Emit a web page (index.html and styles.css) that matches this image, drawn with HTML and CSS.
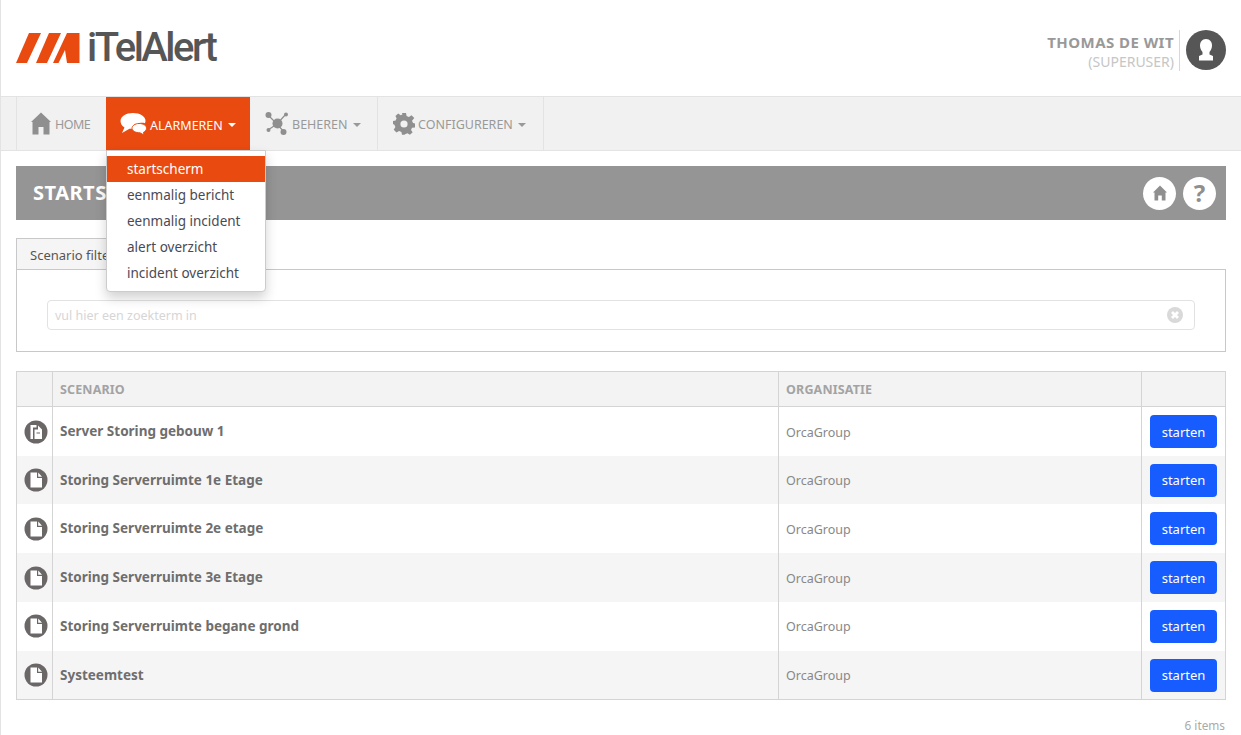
FILE: index.html
```html
<!DOCTYPE html>
<html lang="nl">
<head>
<meta charset="utf-8">
<title>iTelAlert</title>
<link rel="stylesheet" href="styles.css">
</head>
<body>
<svg class="sprites" width="0" height="0" aria-hidden="true">
  <symbol id="doc" viewBox="0 0 24 24">
    <circle cx="12" cy="12" r="11.500" fill="#6b6767"/>
    <path d="M6.500 4.500h6.500v5.500h5v9.500H6.500z" fill="#fff"/>
    <path d="M14.200 4.500l3.800 4.200h-3.800z" fill="#fff"/>
  </symbol>
  <symbol id="docs" viewBox="0 0 24 24">
    <circle cx="12" cy="12" r="11.500" fill="#6b6767"/>
    <path d="M6.500 5h6v2.500H9V19H6.500z" fill="#fff"/>
    <path d="M10.500 9.500h3.500V5.500l4 4v9.500h-7.500z" fill="#fff"/>
    <path d="M12.500 12.500h3.500v1h-3.500z" fill="#6b6767"/>
  </symbol>
</svg>
<header class="top">
  <div class="logo">
    <svg class="logo-mark" width="64" height="30" viewBox="0 0 64 30">
      <path d="M13 0h12L11 30H0z" fill="#e94a10"/>
      <path d="M33 0h12L31 30H20z" fill="#e94a10"/>
      <path d="M51 0h12.500v30H51l-2-13-6.500 13H37z" fill="#e94a10"/>
    </svg>
    <span class="logo-text">iTelAlert</span>
  </div>
  <div class="user">
    <div class="user-text">
      <div class="user-name">THOMAS DE WIT</div>
      <div class="user-role">(SUPERUSER)</div>
    </div>
    <div class="avatar">
      <svg width="40" height="40" viewBox="0 0 40 40">
        <circle cx="20" cy="20" r="20" fill="#565656"/>
        <path d="M20 9c4 0 6 3 6 6.500 0 3-1.200 5-2.500 6.500v2.500l3.500 1.500v4.500H13V26l3.500-1.500V22c-1.300-1.500-2.500-3.500-2.500-6.500C14 12 16 9 20 9z" fill="#fff"/>
      </svg>
    </div>
  </div>
</header>

<nav class="nav">
  <a class="nav-item nav-home">
    <svg width="20" height="23" viewBox="0 0 20 23"><path d="M10 .5L20 10h-1.500v12.500H12.500V15h-5v7.500H1.500V10H0z" fill="#8f8f8f"/></svg>
    <span>HOME</span>
  </a>
  <a class="nav-item nav-active">
    <svg width="27" height="24" viewBox="0 0 27 24">
      <path d="M13 1c7 0 12.500 3.300 12.500 8 0 1-.3 1.500-.6 2.200C20 10 15 12 13.500 16.500 12 16.800 11 17 9.500 16.700L2 21l2.500-5.500C2 14 .5 11.500.5 9 .5 4.300 6 1 13 1z" fill="#fff"/>
      <path d="M19 11.500c4.500 0 7.500 2 7.500 4.800 0 1.700-1.300 3.200-3 4l.5 2.700-4-2.200c-4.500 0-8-2-8-4.500s3-4.800 7-4.800z" fill="#fff" stroke="#e94a10" stroke-width="1"/>
    </svg>
    <span>ALARMEREN</span><i class="caret"></i>
  </a>
  <a class="nav-item nav-manage">
    <svg width="24" height="24" viewBox="0 0 24 24">
      <path d="M3 3l9 9M21 2l-9 10M3 18l9-6M19 20l-7-8" stroke="#8f8f8f" stroke-width="1.200"/>
      <circle cx="12.500" cy="11.500" r="5" fill="#8f8f8f"/>
      <circle cx="3.500" cy="3" r="3" fill="#8f8f8f"/>
      <circle cx="21" cy="2.500" r="2" fill="#8f8f8f"/>
      <circle cx="3.500" cy="18" r="2" fill="#8f8f8f"/>
      <circle cx="18.500" cy="20" r="3" fill="#8f8f8f"/>
    </svg>
    <span>BEHEREN</span><i class="caret"></i>
  </a>
  <a class="nav-item nav-config">
    <svg width="22" height="22" viewBox="0 0 22 22">
      <path d="M9 0h4l.6 3 2.300 1 2.600-1.700 2.800 2.800L19 7.700l1 2.300 2 .6v4l-3 .2-1 2.300 1.700 2.200-2.800 2.400-2.400-1.500-2.500 1-.4 .6H9l-.6-2.900-2.300-1-2.600 1.700-2.800-2.800L2.400 14l-1-2.300L0 11V8l2.600-.4 1-2.300L2.400 3l2.800-2.400 2.500 1.600L9.400 1.400z" fill="#8f8f8f"/>
      <circle cx="11" cy="11" r="3.600" fill="#f1f1f1"/>
    </svg>
    <span>CONFIGUREREN</span><i class="caret"></i>
  </a>
</nav>

<ul class="menu">
  <li class="menu-on">startscherm</li>
  <li>eenmalig bericht</li>
  <li>eenmalig incident</li>
  <li>alert overzicht</li>
  <li>incident overzicht</li>
</ul>

<main class="content">
  <div class="title-bar">
    <h1>STARTSCHERM</h1>
    <div class="title-icons">
      <span class="round">
        <svg width="14" height="16" viewBox="0 0 14 16"><path d="M7 .5L14 7.500h-1.500V15.500H8.800V10.500H5.200V15.500H1.500V7.500H0z" fill="#8f8f8f"/></svg>
      </span>
      <span class="round round-q">?</span>
    </div>
  </div>

  <div class="tab">Scenario filter</div>
  <section class="filter">
    <div class="search">
      <span>vul hier een zoekterm in</span>
      <svg width="16" height="16" viewBox="0 0 16 16">
        <circle cx="8" cy="8" r="8" fill="#d9d9d9"/>
        <path d="M5 5l6 6M11 5l-6 6" stroke="#fff" stroke-width="2.800"/>
      </svg>
    </div>
  </section>

  <table class="grid">
    <colgroup>
      <col class="c-icon"><col class="c-name"><col class="c-org"><col class="c-act">
    </colgroup>
    <thead>
      <tr><th></th><th>SCENARIO</th><th>ORGANISATIE</th><th></th></tr>
    </thead>
    <tbody>
      <tr><td class="ic"><svg width="24" height="24"><use href="#docs"/></svg></td><td class="name">Server Storing gebouw 1</td><td class="org">OrcaGroup</td><td class="act"><button>starten</button></td></tr>
      <tr><td class="ic"><svg width="24" height="24"><use href="#doc"/></svg></td><td class="name">Storing Serverruimte 1e Etage</td><td class="org">OrcaGroup</td><td class="act"><button>starten</button></td></tr>
      <tr><td class="ic"><svg width="24" height="24"><use href="#doc"/></svg></td><td class="name">Storing Serverruimte 2e etage</td><td class="org">OrcaGroup</td><td class="act"><button>starten</button></td></tr>
      <tr><td class="ic"><svg width="24" height="24"><use href="#doc"/></svg></td><td class="name">Storing Serverruimte 3e Etage</td><td class="org">OrcaGroup</td><td class="act"><button>starten</button></td></tr>
      <tr><td class="ic"><svg width="24" height="24"><use href="#doc"/></svg></td><td class="name">Storing Serverruimte begane grond</td><td class="org">OrcaGroup</td><td class="act"><button>starten</button></td></tr>
      <tr><td class="ic"><svg width="24" height="24"><use href="#doc"/></svg></td><td class="name">Systeemtest</td><td class="org">OrcaGroup</td><td class="act"><button>starten</button></td></tr>
    </tbody>
  </table>
  <div class="count">6 items</div>
</main>
</body>
</html>
```

FILE: styles.css
```css
* { box-sizing: border-box; }
html, body { height: 100%; }
body {
  margin: 0;
  overflow: hidden;
  background: #fff;
  border-left: 1px solid #e3e3e3;
  font-family: "Noto Sans", "Open Sans", sans-serif;
  font-size: 13px;
  color: #666;
  position: relative;
}
.sprites { position: absolute; }

.top {
  height: 96px;
  display: flex;
  justify-content: space-between;
  align-items: flex-start;
  padding: 30px 15px 0 15px;
}
.logo { display: flex; align-items: center; height: 36px; gap: 7px; }
.logo-mark { display: block; }
.logo-text {
  font-family: Roboto, sans-serif;
  font-size: 40px;
  font-weight: 500;
  letter-spacing: -2.500px;
  color: #565656;
  line-height: 36px;
}
.user { display: flex; align-items: stretch; }
.user-text { text-align: right; padding: 3px 5px 0 0; border-right: 1px solid #d8d8d8; height: 41px; }
.user-name { font-weight: 700; font-size: 15px; letter-spacing: .45px; color: #999; line-height: 19px; }
.user-role { font-size: 14px; color: #c6c6c6; line-height: 20px; }
.avatar { margin-left: 6px; height: 40px; }
.avatar svg { display: block; }

.nav {
  height: 55px;
  display: flex;
  padding-left: 15px;
  background: #f1f1f1;
  border-top: 1px solid #e3e3e3;
  border-bottom: 1px solid #e3e3e3;
}
.nav-item {
  display: flex;
  align-items: center;
  gap: 3px;
  padding-top: 2px;
  border-left: 1px solid #e3e3e3;
  font-size: 12.500px;
  color: #999;
}
.nav-item svg { margin-top: -2px; }
.nav-home { width: 90px; padding-left: 14px; gap: 4px; letter-spacing: -.5px; }
.nav-active {
  width: 144px;
  padding-left: 14px;
  background: #e94a10;
  color: #fff;
  border-left: 0;
  height: 54px;
}
.nav-manage { width: 127px; padding-left: 15px; gap: 3px; border-left: 0; }
.nav-config { width: 167px; padding-left: 15px; gap: 3px; border-right: 1px solid #e3e3e3; }
.caret {
  width: 0;
  height: 0;
  margin-left: 2px;
  border-left: 4px solid transparent;
  border-right: 4px solid transparent;
  border-top: 4px solid currentColor;
}

.menu {
  position: absolute;
  left: 105px;
  top: 150px;
  width: 160px;
  height: 142px;
  margin: 0;
  padding: 5px 0;
  list-style: none;
  background: #fff;
  border: 1px solid #ccc;
  border-radius: 0 0 4px 4px;
  box-shadow: 0 6px 12px rgba(0, 0, 0, .18);
  z-index: 5;
}
.menu li {
  height: 26px;
  line-height: 26px;
  padding-left: 20px;
  font-size: 13.500px;
  color: #4a4a55;
}
.menu .menu-on { background: #e94a10; color: #fff; }

.content { padding: 15px 15px 0; }
.title-bar {
  height: 54px;
  display: flex;
  justify-content: space-between;
  align-items: center;
  background: #959595;
  padding: 0 10px 0 17px;
}
.title-bar h1 { margin: 0 0 2px; font-size: 20px; letter-spacing: .5px; font-weight: 700; color: #fff; }
.title-icons { display: flex; gap: 7px; }
.round {
  width: 33px;
  height: 33px;
  border-radius: 50%;
  background: #fff;
  display: flex;
  align-items: center;
  justify-content: center;
}
.round-q { font-size: 24px; font-weight: 700; color: #8f8f8f; line-height: 1; }

.tab {
  width: 120px;
  height: 32px;
  margin-top: 18px;
  padding-left: 13px;
  line-height: 32px;
  font-size: 13px;
  background: #f5f5f5;
  border: 1px solid #c8c8c8;
  border-bottom: 0;
  color: #555;
}
.filter {
  height: 83px;
  margin-top: -1px;
  border: 1px solid #c8c8c8;
  padding: 30px 30px 0;
  background: #fff;
}
.search {
  height: 30px;
  display: flex;
  align-items: center;
  justify-content: space-between;
  padding: 0 11px 0 7px;
  border: 1px solid #e2e2e2;
  border-radius: 4px;
  font-size: 12.500px;
  color: #d6d6d6;
}

.grid {
  width: 1210px;
  margin-top: 19px;
  border-collapse: collapse;
  table-layout: fixed;
  border: 1px solid #d4d4d4;
}
.c-icon { width: 36px; }
.c-org { width: 363px; }
.c-act { width: 84px; }
.grid th {
  height: 35.400px;
  padding: 0 7px;
  text-align: left;
  font-size: 12.500px;
  letter-spacing: .15px;
  font-weight: 700;
  color: #a3a3a3;
  background: #f3f3f3;
  border: 1px solid #d4d4d4;
}
.grid td {
  height: 48.800px;
  padding: 0 7px;
  border-left: 1px solid #d4d4d4;
  border-right: 1px solid #d4d4d4;
}
.grid tbody tr:nth-child(even) td { background: #f5f5f5; }
.grid .ic { padding: 0 0 0 7px; }
.grid .ic svg { display: block; }
.grid .name { font-weight: 700; font-size: 13.500px; color: #6e6e6e; padding-bottom: 1px; }
.grid .org { font-size: 12.500px; color: #888; padding-top: 1px; }
.grid .act { padding: 0 8px; }
.grid button {
  display: block;
  width: 67px;
  height: 33px;
  border: 0;
  border-radius: 4px;
  background: #175cff;
  color: #fff;
  font-family: inherit;
  font-size: 13px;
  padding: 0;
}
.count { margin-top: 17px; padding-right: 1px; text-align: right; font-size: 11.800px; color: #aaa; }
```
